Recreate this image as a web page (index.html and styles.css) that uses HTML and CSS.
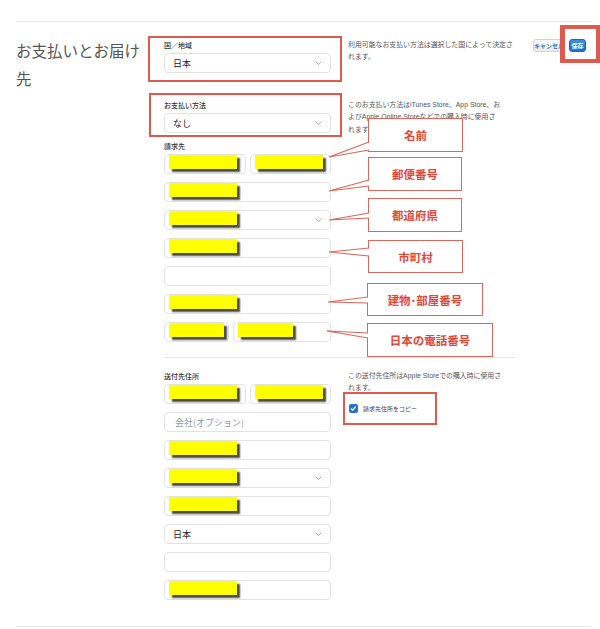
FILE: index.html
```html
<!DOCTYPE html>
<html lang="ja">
<head>
<meta charset="utf-8">
<title>お支払いとお届け先</title>
<link rel="stylesheet" href="styles.css">
</head>
<body>
<div class="page">
  <div class="section">
    <h2 class="title">お支払いとお届け先</h2>
    <div class="main">
      <div class="row r-country">
        <div class="formcol">
          <div class="lbl">国／地域</div>
          <div class="field"><span class="val">日本</span><svg class="chev" viewBox="0 0 7 4"><polyline points="0.5,0.5 3.5,3.5 6.5,0.5"/></svg></div>
        </div>
        <p class="desc">利用可能なお支払い方法は選択した国によって決定さ<br>れます。</p>
      </div>
      <div class="row r-payment">
        <div class="formcol">
          <div class="lbl">お支払い方法</div>
          <div class="field"><span class="val">なし</span><svg class="chev" viewBox="0 0 7 4"><polyline points="0.5,0.5 3.5,3.5 6.5,0.5"/></svg></div>
        </div>
        <p class="desc">このお支払い方法はiTunes Store、App Store、お<br>よびApple Online Storeなどでの購入時に使用さ<br>れます。</p>
      </div>
      <div class="row r-billing">
        <div class="formcol">
          <div class="lbl">請求先</div>
          <div class="fields">
            <div class="pair">
              <div class="field"><span class="mask"></span></div>
              <div class="field"><span class="mask"></span></div>
            </div>
            <div class="field"><span class="mask"></span></div>
            <div class="field"><span class="mask"></span><svg class="chev" viewBox="0 0 7 4"><polyline points="0.5,0.5 3.5,3.5 6.5,0.5"/></svg></div>
            <div class="field"><span class="mask"></span></div>
            <div class="field"></div>
            <div class="field"><span class="mask"></span></div>
            <div class="pair phone">
              <div class="field"><span class="mask short"></span></div>
              <div class="field"><span class="mask short"></span></div>
            </div>
          </div>
        </div>
      </div>
      <div class="sep"></div>
      <div class="row r-shipping">
        <div class="formcol">
          <div class="lbl">送付先住所</div>
          <div class="fields">
            <div class="pair">
              <div class="field"><span class="mask"></span></div>
              <div class="field"><span class="mask"></span></div>
            </div>
            <div class="field"><span class="ph">会社(オプション)</span></div>
            <div class="field"><span class="mask"></span></div>
            <div class="field"><span class="mask"></span><svg class="chev" viewBox="0 0 7 4"><polyline points="0.5,0.5 3.5,3.5 6.5,0.5"/></svg></div>
            <div class="field"><span class="mask"></span></div>
            <div class="field"><span class="val">日本</span><svg class="chev" viewBox="0 0 7 4"><polyline points="0.5,0.5 3.5,3.5 6.5,0.5"/></svg></div>
            <div class="field"></div>
            <div class="field"><span class="mask"></span></div>
          </div>
        </div>
        <div class="desc">
          <p class="dtext">この送付先住所はApple Storeでの購入時に使用さ<br>れます。</p>
          <div class="copy">
            <span class="cb"><svg viewBox="0 0 8 8"><polyline points="1.8,4.2 3.4,5.7 6.3,2.6"/></svg></span>
            <span class="cbl">請求先住所をコピー</span>
          </div>
        </div>
      </div>
    </div>
    <div class="actions">
      <button class="btn cancel">キャンセル</button>
      <button class="btn save">保存</button>
    </div>
  </div>
</div>

<div class="annot">
  <div class="hl hl-country"></div>
  <div class="hl hl-payment"></div>
  <div class="hl hl-save"></div>
  <div class="hl hl-copy"></div>

  <div class="co co-name">名前</div>
  <div class="co co-zip">郵便番号</div>
  <div class="co co-pref">都道府県</div>
  <div class="co co-city">市町村</div>
  <div class="co co-bldg">建物･部屋番号</div>
  <div class="co co-tel">日本の電話番号</div>

  <svg class="tails" viewBox="0 0 600 629">
    <polygon class="tfill" points="370,142 329,157 370,150"/>
    <polyline class="tline" points="369,142 329,157 369,150"/>
    <polygon class="tfill" points="370,180 329,191 370,186"/>
    <polyline class="tline" points="369,180 329,191 369,186"/>
    <polygon class="tfill" points="370,213 329,220 370,218"/>
    <polyline class="tline" points="369,213 329,220 369,218"/>
    <polygon class="tfill" points="370,248 329,252 370,256"/>
    <polyline class="tline" points="369,248 329,252 369,256"/>
    <polygon class="tfill" points="369,297 328,302 369,303"/>
    <polyline class="tline" points="368,297 328,302 368,303"/>
    <polygon class="tfill" points="369,333 327,331 369,338"/>
    <polyline class="tline" points="368,333 327,331 368,338"/>
  </svg>
</div>
</body>
</html>
```

FILE: styles.css
```css
html, body {
  margin: 0;
  padding: 0;
  background: #fff;
  overflow: hidden;
}
body {
  width: 600px;
  height: 629px;
  position: relative;
  font-family: "Noto Sans CJK JP", "Noto Sans", sans-serif;
  color: #333;
}
.page {
  padding: 21px 9px 0 16px;
}
.section {
  display: flex;
  border-top: 1px solid #e6e6e6;
  border-bottom: 1px solid #e6e6e6;
  padding-bottom: 26px;
}
.title {
  flex: none;
  width: 132px;
  margin: 0 16px 0 0;
  padding-top: 14px;
  font-size: 15.5px;
  line-height: 28px;
  font-weight: 400;
  color: #555;
}
.main {
  flex: none;
  width: 351px;
}
.row {
  display: flex;
  gap: 17px;
  align-items: flex-start;
}
.r-country { margin-top: 18px; }
.r-payment { margin-top: 27px; }
.r-billing { margin-top: 8px; }
.formcol {
  flex: none;
  width: 167px;
}
.desc {
  flex: none;
  width: 167px;
  margin: -1.25px 0 -60px 0;
  font-family: "Liberation Sans", "Noto Sans CJK JP", sans-serif;
  font-size: 6.9px;
  line-height: 12.5px;
  color: #555;
  white-space: nowrap;
}
.dtext { margin: 0; }
.lbl {
  font-size: 7px;
  line-height: 10px;
  margin-bottom: 3px;
  font-weight: 500;
  color: #333;
}
.fields {
  display: flex;
  flex-direction: column;
  gap: 8px;
}
.pair {
  display: grid;
  grid-template-columns: 1fr 1fr;
  gap: 4px;
}
.pair.phone { grid-template-columns: 65px 1fr; }
.field {
  height: 20px;
  box-sizing: border-box;
  border: 1px solid #e2e2e2;
  border-radius: 4px;
  background: #fff;
  display: flex;
  align-items: center;
}
.val {
  font-size: 9px;
  padding-left: 8px;
  color: #222;
}
.ph {
  font-size: 9px;
  padding-left: 10px;
  color: #999;
}
.chev {
  width: 7px;
  height: 4px;
  margin-left: auto;
  margin-right: 8px;
  fill: none;
  stroke: #9a9a9a;
  stroke-width: 0.8;
}
.mask {
  align-self: flex-start;
  width: 68px;
  height: 14px;
  margin-left: 4px;
  background: #ffff00;
  box-shadow: 3px 3px 1.5px #4d4d4d;
}
.mask.short { width: 55px; }
.sep {
  height: 1px;
  background: #e6e6e6;
  margin: 15px 0 13px;
}
.copy {
  display: flex;
  align-items: center;
  gap: 5.5px;
  margin-top: 9.5px;
  margin-left: 1px;
}
.cb {
  width: 8.5px;
  height: 8.5px;
  border-radius: 2px;
  background: #2a6fd1;
  display: flex;
}
.cb svg {
  width: 8.5px;
  height: 8.5px;
  fill: none;
  stroke: #fff;
  stroke-width: 1.1;
}
.cbl {
  font-size: 6px;
  line-height: 8px;
  color: #444;
}
.actions {
  flex: 1;
  display: flex;
  justify-content: flex-end;
  align-items: flex-start;
  gap: 4px;
  padding: 17px 5px 0 0;
}
.btn {
  height: 13px;
  box-sizing: border-box;
  padding: 0;
  font-family: inherit;
  font-size: 6px;
  line-height: 11px;
  font-weight: 700;
  border-radius: 3px;
  text-align: center;
  white-space: nowrap;
}
.cancel {
  width: 32px;
  background: linear-gradient(#fcfcfc, #ebebeb);
  border: 1px solid #d2d2d2;
  color: #2f74c4;
}
.save {
  width: 17px;
  background: linear-gradient(#3f8fe0, #1f6fc8);
  border: 1px solid #1d67b9;
  color: #fff;
}

/* annotation overlay */
.annot {
  position: absolute;
  left: 0;
  top: 0;
  width: 600px;
  height: 629px;
  pointer-events: none;
}
.hl {
  position: absolute;
  box-sizing: border-box;
  border: 2px solid #dc5a4e;
}
.hl-country { left: 148px; top: 36px; width: 194px; height: 46px; }
.hl-payment { left: 149px; top: 93px; width: 193px; height: 44px; }
.hl-save {
  left: 560px; top: 25px; width: 40px; height: 38px;
  border-width: 4px 4px 4px 5px;
}
.hl-copy { left: 343px; top: 392px; width: 94px; height: 33px; }
.co {
  position: absolute;
  box-sizing: border-box;
  border: 1.5px solid #d8675c;
  background: #fff;
  display: flex;
  align-items: center;
  justify-content: center;
  color: #e0483a;
  font-weight: 700;
  font-size: 11.5px;
}
.co-name { left: 368px; top: 118px; width: 95px; height: 34px; }
.co-zip  { left: 368px; top: 157px; width: 94px; height: 34px; }
.co-pref { left: 368px; top: 198px; width: 94px; height: 34px; }
.co-city { left: 368px; top: 240px; width: 95px; height: 33px; }
.co-bldg { left: 367px; top: 283px; width: 116px; height: 33px; }
.co-tel  { left: 367px; top: 323px; width: 126px; height: 34px; }
.tails {
  position: absolute;
  left: 0;
  top: 0;
  width: 600px;
  height: 629px;
}
.tfill { fill: #fff; stroke: none; }
.tline { fill: none; stroke: #d8675c; stroke-width: 1.2; }
```
